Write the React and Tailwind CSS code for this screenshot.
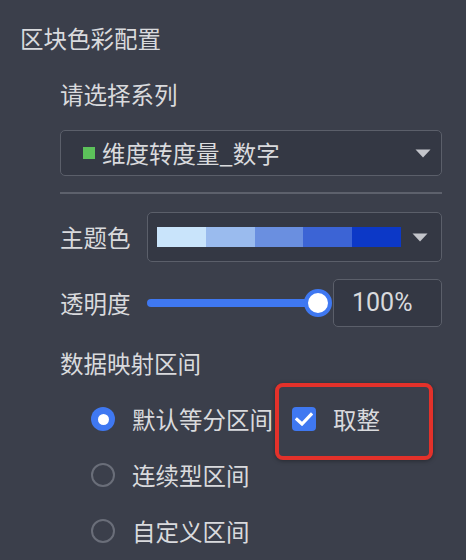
import React from "react";

const font = { fontFamily: '"Noto Sans CJK SC", "Noto Sans", sans-serif' };

function Tri({ className }) {
  return (
    <svg width="16" height="9" viewBox="0 0 16 9" className={className}>
      <path d="M0.5 0.5 H15.5 L8 8.5 Z" fill="#c3c5cb" />
    </svg>
  );
}

function Radio({ checked }) {
  return checked ? (
    <div className="w-6 h-6 rounded-full bg-[#3f78f1] flex items-center justify-center shrink-0">
      <div className="w-[11px] h-[11px] rounded-full bg-white" />
    </div>
  ) : (
    <div className="w-6 h-6 rounded-full border-2 border-[#6a6e79] shrink-0" />
  );
}

export default function App() {
  const colors = ["#c9e4fb", "#9abbee", "#6a8fe0", "#3c64d5", "#0c38c7"];
  return (
    <div
      className="w-[466px] h-[560px] bg-[#3b3f4b] text-[#d9dadd] text-[23.5px] overflow-hidden flex flex-col pl-5 pt-[22px]"
      style={font}
    >
      <div className="leading-[32px] h-8">区块色彩配置</div>
      <div className="pl-10 pr-6 flex flex-col">
        <div className="leading-[32px] h-8 mt-6">请选择系列</div>
        <div className="mt-5 h-[46px] w-[382px] rounded-[5px] border border-[#5b5f6a] bg-[#343844] flex items-center pl-[22px] pr-[10px]">
          <div className="w-3 h-3 bg-[#5cc15a]" />
          <span className="ml-[7px] leading-[32px] flex-1">维度转度量_数字</span>
          <Tri />
        </div>
        <div className="mt-4 h-[2px] w-[382px] bg-[#5d616c]" />
        <div className="mt-[18px] flex items-center w-[382px]">
          <span className="w-[87px] leading-[32px]">主题色</span>
          <div className="h-[50px] flex-1 rounded-[5px] border border-[#5b5f6a] bg-[#343844] flex items-center pl-[9px] pr-[13px]">
            <div className="flex h-5 w-[244px]">
              {colors.map((c) => (
                <div key={c} className="flex-1" style={{ background: c }} />
              ))}
            </div>
            <div className="flex-1" />
            <Tri />
          </div>
        </div>
        <div className="mt-[17px] flex items-center w-[382px] h-12">
          <span className="w-[87px] leading-[32px]">透明度</span>
          <div className="relative w-[186px] h-12 flex items-center">
            <div className="h-2 w-[171px] rounded-full bg-[#3f78f1]" />
            <div className="absolute left-[157px] top-[10px] w-7 h-7 rounded-full bg-white border-4 border-[#3f78f1]" />
          </div>
          <div className="h-12 flex-1 rounded-[5px] border border-[#5b5f6a] bg-[#343844] flex items-center pl-[18px] text-[25px]" style={{ fontFamily: '"Roboto", "Noto Sans", sans-serif' }}>
            100%
          </div>
        </div>
        <div className="mt-5 leading-[32px] h-8">数据映射区间</div>
        <div className="mt-6 flex flex-col gap-6 pl-[31px]">
          <div className="flex items-center h-8">
            <Radio checked />
            <span className="ml-[17px] leading-[32px]">默认等分区间</span>
            <div className="relative ml-[19px] flex items-center h-8">
              <div className="w-6 h-6 rounded-[4px] bg-[#3f78f1] flex items-center justify-center">
                <svg width="18" height="14" viewBox="0 0 18 14">
                  <path d="M2 7.5 L7 12 L16 2.5" fill="none" stroke="white" strokeWidth="3.2" strokeLinecap="square" />
                </svg>
              </div>
              <span className="ml-[17px] leading-[32px]">取整</span>
              <div className="absolute left-[-17px] top-[-20px] w-[158px] h-[77px] border-4 border-[#e3312a] rounded-[8px] shadow-[0_1px_4px_rgba(0,0,0,0.35)]" />
            </div>
          </div>
          <div className="flex items-center h-8">
            <Radio />
            <span className="ml-[17px] leading-[32px]">连续型区间</span>
          </div>
          <div className="flex items-center h-8">
            <Radio />
            <span className="ml-[17px] leading-[32px]">自定义区间</span>
          </div>
        </div>
      </div>
    </div>
  );
}
